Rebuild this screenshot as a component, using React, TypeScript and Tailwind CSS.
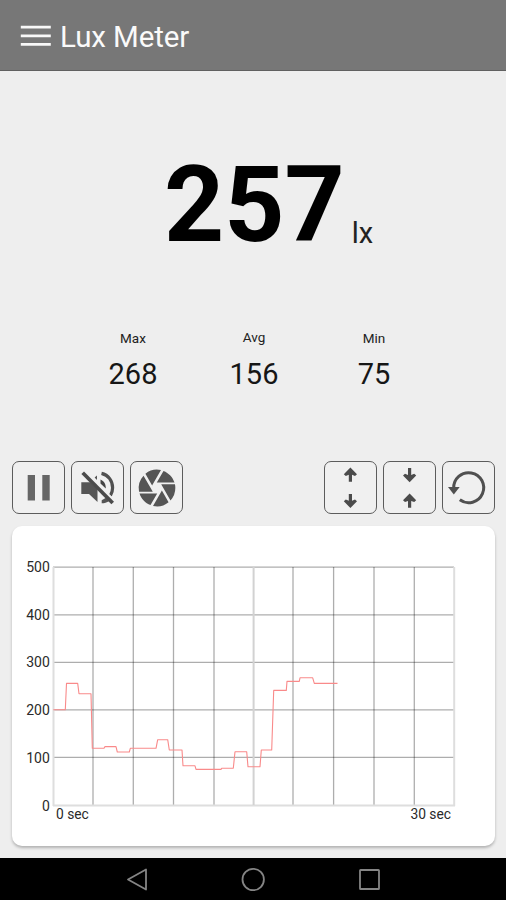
import type { ReactNode } from "react";
import { MdCamera } from "react-icons/md";

const verticals = [93, 133.3, 173.5, 214, 293, 333.6, 374, 414.3];
const horizontals = [567.2, 614.8, 662.4, 709.8, 757.4];
const levels = [500, 400, 300, 200, 100, 0];

const trace =
  "53.3,709.8 65.3,709.8 66.5,683.4 77.7,683.4 79,693.8 91,693.8 92.3,748.3 104,748.3 105,746.6 116,746.6 117.3,752 129.3,752 130.3,748.3 156,748.3 157.7,739.7 167.7,739.7 169.3,750 182,750 183,765.8 195,765.8 196,769.4 221,769.4 221.7,768.2 233.3,768.2 235,751.8 246.7,751.8 248,766.8 260,766.8 261.3,750 271.7,750 273.7,690.4 286.3,690.4 287,681.4 299.3,681.4 300,677.8 312.7,677.8 314.3,683.4 337.5,683.4";

function ToolButton({ label, children }: { label: string; children: ReactNode }) {
  return (
    <button
      aria-label={label}
      className="flex h-[53px] w-[53px] items-center justify-center rounded-[7px] border border-[#5c5c5c] bg-[#f0f0f0]"
    >
      {children}
    </button>
  );
}

function Glyph({ children }: { children: ReactNode }) {
  return (
    <svg viewBox="1 1 51 51" className="h-[51px] w-[51px] shrink-0" fill="none">
      {children}
    </svg>
  );
}

function Stat({ label, value, className, labelClassName = "" }: { label: string; value: number; className: string; labelClassName?: string }) {
  return (
    <div className={`flex flex-col items-center ${className}`}>
      <span className={`text-[13.5px] leading-4 text-[#222] ${labelClassName}`}>{label}</span>
      <span className="mt-[10px] text-[29px] leading-[36px] text-[#161616]">{value}</span>
    </div>
  );
}

function Chart() {
  return (
    <svg viewBox="12 526 483 320" className="block h-[320px] w-[483px]" fill="none">
      <g stroke="#000" strokeOpacity="0.32" strokeWidth="1.3">
        {verticals.map((x) => (
          <line key={x} x1={x} x2={x} y1="567" y2="805" />
        ))}
        {horizontals.map((y) => (
          <line key={y} x1="53" x2="454" y1={y} y2={y} />
        ))}
      </g>
      <g stroke="#dedede" strokeWidth="2">
        <path d="M53.5 567V806M454.2 567V806M53 805.5H455" />
        <path d="M253.6 567V805" stroke="#d2d2d2" />
      </g>
      <polyline points={trace} stroke="#f98a8a" strokeWidth="1.1" strokeLinejoin="round" />
      <g fill="#2a2a2a" fontSize="14">
        {levels.map((n, i) => (
          <text key={n} x="49.8" y={572 + i * 47.7} textAnchor="end">
            {n}
          </text>
        ))}
        <text x="56" y="819.3" fontSize="13.8">0 sec</text>
        <text x="451" y="819.3" fontSize="13.8" textAnchor="end">30 sec</text>
      </g>
    </svg>
  );
}

export default function App() {
  return (
    <div className="flex h-[900px] w-[506px] flex-col overflow-hidden bg-[#eeeeee] font-['Roboto',sans-serif]">
      <header className="flex h-[71px] items-center border-b border-[#606060] bg-[#777777] pl-[20px] pt-[3px]">
        <svg viewBox="0 0 32 24" className="h-6 w-8" stroke="#f8f8f8" strokeWidth="2.8">
          <path d="M.8 2.2H30.8M.8 10.8H30.8M.8 19.4H30.8" />
        </svg>
        <h1 className="ml-[8px] pt-px text-[29.5px] leading-9 tracking-[-0.1px] text-[#fafafa]">Lux Meter</h1>
      </header>

      <main className="flex flex-1 flex-col">
        <div className="mt-[72px] flex h-[126px] items-baseline pl-[164px]">
          <span className="text-[105px] font-bold leading-[126px] text-black">257</span>
          <span className="ml-[7px] translate-y-[2px] text-[29px] text-[#222]">lx</span>
        </div>

        <div className="mt-[61px] flex pl-[92px]">
          <Stat label="Max" value={268} className="w-[82px]" />
          <Stat label="Avg" value={156} className="ml-[39px] w-[82px]" labelClassName="-translate-y-px" />
          <Stat label="Min" value={75} className="ml-[38px] w-[82px]" />
        </div>

        <div className="mt-[69px] flex justify-between pl-[12px] pr-[11px]">
          <div className="flex gap-[6px]">
            <ToolButton label="Pause">
              <Glyph>
                <path d="M15.7 14H23V39.5H15.7ZM30.3 14H37.7V39.5H30.3Z" fill="#666" />
              </Glyph>
            </ToolButton>
            <ToolButton label="Mute">
              <Glyph>
                <path d="M10.3 21.2H19L26.5 28V41L18 33H10.3Z" fill="#555" />
                <path d="M23.6 16.6L26 14.6V19Z" fill="#555" />
                <path d="M30.5 12.4C37.5 14 41.6 20 41.6 26.7C41.6 30 40.8 32.4 39.4 34.6" stroke="#505050" strokeWidth="3.2" />
                <path d="M29.5 18.4C33 20 34.8 22.6 34.8 27.4L29.5 22.4Z" fill="#444" />
                <path d="M30.7 39.2L35 36.8L38 40.2C36 41.4 33.3 42.3 30.7 42.3Z" fill="#555" />
                <path d="M13.8 9.6L43.8 39.9" stroke="#f0f0f0" strokeWidth="1.6" />
                <path d="M11.7 11.7L41.7 42" stroke="#4b4b4b" strokeWidth="3.7" />
              </Glyph>
            </ToolButton>
            <ToolButton label="Camera">
              <MdCamera className="h-[44px] w-[44px] shrink-0 text-[#555]" />
            </ToolButton>
          </div>
          <div className="flex gap-[6px]">
            <ToolButton label="Expand range">
              <Glyph>
                <path d="M26.4 6.5L33 13.2L31 15L28 13.8V20.7H24.8V13.8L21.8 15L19.8 13.2Z" fill="#4b4b4b" />
                <path d="M26.4 47L33 40.3L31 38.5L28 39.7V33H24.8V39.7L21.8 38.5L19.8 40.3Z" fill="#4b4b4b" />
              </Glyph>
            </ToolButton>
            <ToolButton label="Shrink range">
              <Glyph>
                <path d="M26.6 21.2L33.2 14.5L31.2 12.7L28.2 13.9V7H25V13.9L22 12.7L20 14.5Z" fill="#4b4b4b" />
                <path d="M26.6 32.6L33.2 39.3L31.2 41.1L28.2 39.9V46.8H25V39.9L22 41.1L20 39.3Z" fill="#4b4b4b" />
              </Glyph>
            </ToolButton>
            <ToolButton label="Reset">
              <Glyph>
                <path d="M11.7 27.5A15 15 0 1 1 17.8 38.8" stroke="#505050" strokeWidth="3" />
                <path d="M6 26H17.7L11.8 33.6Z" fill="#505050" />
              </Glyph>
            </ToolButton>
          </div>
        </div>

        <section className="ml-[12px] mt-[12px] h-[320px] w-[483px] rounded-[10px] bg-white shadow-[0_2px_3px_rgba(0,0,0,0.25)]">
          <Chart />
        </section>
      </main>

      <nav className="h-[42px] bg-black">
        <svg viewBox="0 858 506 42" className="block h-[42px] w-[506px]" fill="none" stroke="#858585" strokeWidth="1.8" strokeLinejoin="round">
          <path d="M128 879.5L146 869.5V889.5Z" />
          <circle cx="253.2" cy="879.5" r="10.7" />
          <rect x="360" y="870" width="19" height="19" rx="0.6" />
        </svg>
      </nav>
    </div>
  );
}
